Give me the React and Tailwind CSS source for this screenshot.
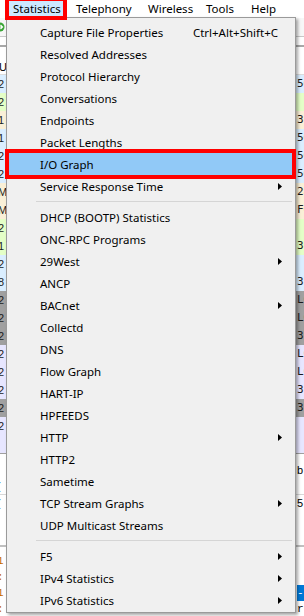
import React from 'react';

const groups = [
  [
    { label: 'Capture File Properties', shortcut: 'Ctrl+Alt+Shift+C' },
    { label: 'Resolved Addresses' },
    { label: 'Protocol Hierarchy' },
    { label: 'Conversations' },
    { label: 'Endpoints' },
    { label: 'Packet Lengths' },
    { label: 'I/O Graph', active: true },
    { label: 'Service Response Time', sub: true },
  ],
  [
    { label: 'DHCP (BOOTP) Statistics' },
    { label: 'ONC-RPC Programs' },
    { label: '29West', sub: true },
    { label: 'ANCP' },
    { label: 'BACnet', sub: true },
    { label: 'Collectd' },
    { label: 'DNS' },
    { label: 'Flow Graph' },
    { label: 'HART-IP' },
    { label: 'HPFEEDS' },
    { label: 'HTTP', sub: true },
    { label: 'HTTP2' },
    { label: 'Sametime' },
    { label: 'TCP Stream Graphs', sub: true },
    { label: 'UDP Multicast Streams' },
  ],
  [
    { label: 'F5', sub: true },
    { label: 'IPv4 Statistics', sub: true },
    { label: 'IPv6 Statistics', sub: true },
  ],
];

// packet list rows behind the menu: [background, first column, last column]
const rows = [
  ['#daeeff', '2', '50'],
  ['#e4ffc7', '2', ''],
  ['#faf0d7', '1', '31'],
  ['#daeeff', '1', '50'],
  ['#daeeff', '2', '50'],
  ['#daeeff', '2', '50'],
  ['#faf0d7', 'M', '2a'],
  ['#faf0d7', 'M', 'F0'],
  ['#e4ffc7', '2', ''],
  ['#e4ffc7', '1', '31'],
  ['#daeeff', '2', ''],
  ['#daeeff', '8', '31'],
  ['#a0a0a0', '2', 'L0'],
  ['#a0a0a0', '2', 'L0'],
  ['#a0a0a0', '2', '31'],
  ['#e7e6ff', '2', 'L0'],
  ['#e7e6ff', '2', 'L0'],
  ['#e7e6ff', '2', '31'],
  ['#a0a0a0', '2', '31'],
  ['#e7e6ff', '2', ''],
  ['#e7e6ff', '', ''],
];

function Arrow() {
  return (
    <svg width="4" height="7" viewBox="0 0 4 7" className="shrink-0">
      <path d="M0 0L4 3.5L0 7Z" fill="#000" />
    </svg>
  );
}

function MenuItem({ item }) {
  return (
    <div
      className={`flex h-[22px] items-center justify-between pl-[31px] pr-[10px] pt-px whitespace-nowrap ${
        item.active ? 'relative z-10 bg-[#91c9f7] outline-4 outline-[#ff0000]' : ''
      }`}
    >
      <span>{item.label}</span>
      {item.shortcut && <span className="mr-[4px]">{item.shortcut}</span>}
      {item.sub && <Arrow />}
    </div>
  );
}

export default function App() {
  return (
    <div className="relative h-[616px] w-[304px] overflow-hidden bg-white font-['Segoe_UI','Noto_Sans',sans-serif] text-[11.5px] text-black">
      {/* menu bar */}
      <div className="flex h-[18px] items-start bg-white pl-[9px] pt-[1px] leading-[16px] whitespace-nowrap">
        <span className="relative z-20 mr-[13px] h-[15px] w-[54px] bg-[#cce8ff] pl-[4px] outline-4 outline-[#ff0000]">
          Statistics
        </span>
        <span className="w-[72px]">Telephony</span>
        <span className="w-[58px]">Wireless</span>
        <span className="w-[45px]">Tools</span>
        <span>Help</span>
      </div>

      {/* toolbar */}
      <div className="flex h-[19px] items-center border-b border-[#c8c8c8] bg-[#f7f7f7]">
        <svg width="10" height="10" viewBox="0 0 10 10" className="-ml-[5px]">
          <circle cx="5" cy="5" r="4.5" fill="#3aa535" />
          <path d="M3 5h4M5.5 3l2 2-2 2" stroke="#fff" strokeWidth="1.2" fill="none" />
        </svg>
      </div>

      {/* filter bar */}
      <div className="h-[10px] border-b-2 border-[#a8a8a8] bg-white" />
      <div className="h-[14px] bg-white" />

      {/* packet list header */}
      <div className="flex h-[14px] items-center justify-between border-b border-[#dcdcdc] bg-white font-['Liberation_Sans',sans-serif] text-[11px]">
        <span className="-ml-[1px]">U</span>
        <span />
      </div>

      {/* packet list */}
      <div className="flex flex-col font-['Liberation_Sans',sans-serif] text-[11px] leading-[18px] text-[#1c1c1c]">
        {rows.map(([bg, left, right], i) => (
          <div key={i} className="flex h-[18px] justify-between" style={{ background: bg }}>
            <span className="-ml-[2px]">{left}</span>
            <span className="w-[7px] overflow-hidden whitespace-nowrap font-['DejaVu_Sans_Mono',monospace]">{right}</span>
          </div>
        ))}
      </div>

      {/* details pane */}
      <div className="flex h-[92px] flex-col border-t border-[#a0a0a0] bg-white pt-[8px] font-['Liberation_Sans',sans-serif] text-[11px] leading-[16px]">
        <div className="flex justify-between text-[#1f5fbf]">
          <span className="-ml-[3px]">!</span>
          <span className="w-[7px] overflow-hidden text-black">b</span>
        </div>
        <div className="flex justify-between border-b border-[#d8d8d8] text-[#1f5fbf]">
          <span className="-ml-[3px]">(</span>
          <span />
        </div>
        <div className="flex justify-between text-[#1f5fbf]">
          <span className="-ml-[3px]">(</span>
          <span className="w-[7px] overflow-hidden text-black">5</span>
        </div>
        <div className="flex justify-between text-[#1f5fbf]">
          <span className="-ml-[3px]">.</span>
          <span />
        </div>
      </div>

      {/* bytes pane */}
      <div className="flex h-[70px] flex-col border-t-2 border-[#c0c0c0] bg-white pt-[6px] font-['Liberation_Mono',monospace] text-[11px] leading-[16px] text-[#c56a00]">
        <div className="flex justify-between">
          <span className="-ml-[3px]">1</span>
          <span />
        </div>
        <div className="flex justify-between">
          <span className="-ml-[3px]">:</span>
          <span />
        </div>
        <div className="flex justify-between">
          <span className="-ml-[3px]">1</span>
          <span className="w-[7px] bg-[#0078d7] text-white">-</span>
        </div>
        <div className="flex justify-between">
          <span className="-ml-[3px]">:</span>
          <span className="w-[7px] overflow-hidden text-black">r</span>
        </div>
      </div>

      {/* statistics dropdown */}
      <div className="absolute left-[6px] top-[17px] z-10 w-[290px] border border-[#9a9a9a] bg-[#f0f0f0] pb-[1px] pl-[2px] pr-[3px] pt-[3px] shadow-[2px_2px_3px_rgba(0,0,0,0.35)]">
        {groups.map((group, gi) => (
          <div key={gi}>
            {gi > 0 && (
              <div className="h-[9px] pl-[27px] pt-[4px]">
                <div className="h-px bg-[#d5d5d5]" />
              </div>
            )}
            {group.map((item) => (
              <MenuItem key={item.label} item={item} />
            ))}
          </div>
        ))}
      </div>
    </div>
  );
}
